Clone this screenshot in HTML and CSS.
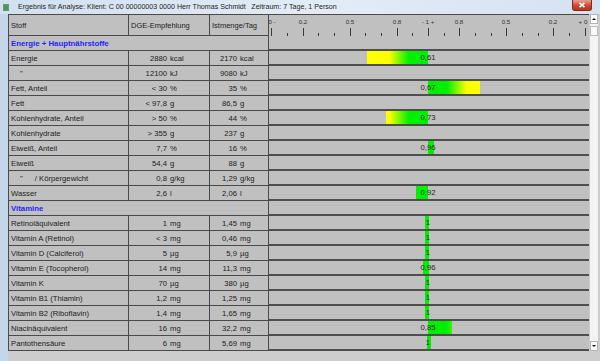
FILE: index.html
```html
<!DOCTYPE html>
<html lang="de">
<head>
    <meta charset="utf-8">
    <title>Ergebnis für Analyse</title>
    <link rel="stylesheet" href="styles.css">
</head>
<body>
<div class="window">
    <div class="titlebar">
        <svg class="app-icon" width="6" height="7" viewBox="0 0 6 7"><rect x="0" y="0" width="6" height="7" fill="#7d8b86"/><rect x="1" y="1" width="4" height="5" fill="#2fa84f"/></svg>
        <span class="title">Ergebnis für Analyse: Klient: C 00 00000003 0000 Herr Thomas Schmidt<span class="period">Zeitraum: 7 Tage, 1 Person</span></span>
        <span class="close"><svg width="8" height="6" viewBox="0 0 8 6"><path d="M1.5 0.8 L6.5 5.2 M6.5 0.8 L1.5 5.2" stroke="#fff" stroke-width="1.6"/></svg></span>
    </div>
    <div class="client">
        <div class="view">
            <div class="table">
                <div class="row head">
                    <div class="cell">Stoff</div>
                    <div class="cell">DGE-Empfehlung</div>
                    <div class="cell">Istmenge/Tag</div>
                    <div class="cell chart ruler">
                        <span class="mark" style="left:3px">0 -</span>
                        <span class="mark" style="left:34px">0.2</span>
                        <span class="mark" style="left:81px">0.5</span>
                        <span class="mark" style="left:128px">0.8</span>
                        <span class="mark" style="left:159px">- 1 +</span>
                        <span class="mark" style="left:190px">0.8</span>
                        <span class="mark" style="left:237px">0.5</span>
                        <span class="mark" style="left:284px">0.2</span>
                        <span class="mark" style="left:314px">+ 0</span>
                        <i class="tick major" style="left:2px"></i>
                        <i class="tick" style="left:18px"></i>
                        <i class="tick major" style="left:34px"></i>
                        <i class="tick" style="left:49px"></i>
                        <i class="tick" style="left:65px"></i>
                        <i class="tick major" style="left:81px"></i>
                        <i class="tick" style="left:96px"></i>
                        <i class="tick" style="left:112px"></i>
                        <i class="tick major" style="left:128px"></i>
                        <i class="tick" style="left:143px"></i>
                        <i class="tick major" style="left:159px"></i>
                        <i class="tick" style="left:175px"></i>
                        <i class="tick major" style="left:190px"></i>
                        <i class="tick" style="left:206px"></i>
                        <i class="tick" style="left:222px"></i>
                        <i class="tick major" style="left:237px"></i>
                        <i class="tick" style="left:253px"></i>
                        <i class="tick" style="left:269px"></i>
                        <i class="tick major" style="left:284px"></i>
                        <i class="tick" style="left:300px"></i>
                        <i class="tick major" style="left:316px"></i>
                    </div>
                </div>

                <div class="row section">
                    <div class="cell label">Energie + Hauptnährstoffe</div>
                    <div class="cell chart"></div>
                </div>
                <div class="row">
                    <div class="cell">Energie</div>
                    <div class="cell dge"><span class="num">2880</span><span class="unit">kcal</span></div>
                    <div class="cell ist"><span class="num">2170</span><span class="unit">kcal</span></div>
                    <div class="cell chart"><span class="bar" style="left:98px;width:61px;background-position:-98px 0"></span><span class="val">0,61</span></div>
                </div>
                <div class="row">
                    <div class="cell"><span class="ditto">"</span></div>
                    <div class="cell dge"><span class="num">12100</span><span class="unit">kJ</span></div>
                    <div class="cell ist"><span class="num">9080</span><span class="unit">kJ</span></div>
                    <div class="cell chart"></div>
                </div>
                <div class="row">
                    <div class="cell">Fett, Anteil</div>
                    <div class="cell dge"><span class="num">&lt; 30</span><span class="unit">%</span></div>
                    <div class="cell ist"><span class="num">35</span><span class="unit">%</span></div>
                    <div class="cell chart"><span class="bar" style="left:159px;width:52px;background-position:-159px 0"></span><span class="val">0,67</span></div>
                </div>
                <div class="row">
                    <div class="cell">Fett</div>
                    <div class="cell dge"><span class="num">&lt; 97,8</span><span class="unit">g</span></div>
                    <div class="cell ist"><span class="num">86,5</span><span class="unit">g</span></div>
                    <div class="cell chart"></div>
                </div>
                <div class="row">
                    <div class="cell">Kohlenhydrate, Anteil</div>
                    <div class="cell dge"><span class="num">&gt; 50</span><span class="unit">%</span></div>
                    <div class="cell ist"><span class="num">44</span><span class="unit">%</span></div>
                    <div class="cell chart"><span class="bar" style="left:117px;width:42px;background-position:-117px 0"></span><span class="val">0,73</span></div>
                </div>
                <div class="row">
                    <div class="cell">Kohlenhydrate</div>
                    <div class="cell dge"><span class="num">&gt; 355</span><span class="unit">g</span></div>
                    <div class="cell ist"><span class="num">237</span><span class="unit">g</span></div>
                    <div class="cell chart"></div>
                </div>
                <div class="row">
                    <div class="cell">Eiweiß, Anteil</div>
                    <div class="cell dge"><span class="num">7,7</span><span class="unit">%</span></div>
                    <div class="cell ist"><span class="num">16</span><span class="unit">%</span></div>
                    <div class="cell chart"><span class="bar" style="left:159px;width:6px;background-position:-159px 0"></span><span class="val">0,96</span></div>
                </div>
                <div class="row">
                    <div class="cell">Eiweiß</div>
                    <div class="cell dge"><span class="num">54,4</span><span class="unit">g</span></div>
                    <div class="cell ist"><span class="num">88</span><span class="unit">g</span></div>
                    <div class="cell chart"></div>
                </div>
                <div class="row">
                    <div class="cell"><span class="ditto">"</span><span class="sub">/ Körpergewicht</span></div>
                    <div class="cell dge"><span class="num">0,8</span><span class="unit">g/kg</span></div>
                    <div class="cell ist"><span class="num">1,29</span><span class="unit">g/kg</span></div>
                    <div class="cell chart"></div>
                </div>
                <div class="row">
                    <div class="cell">Wasser</div>
                    <div class="cell dge"><span class="num">2,6</span><span class="unit">l</span></div>
                    <div class="cell ist"><span class="num">2,06</span><span class="unit">l</span></div>
                    <div class="cell chart"><span class="bar" style="left:147px;width:12px;background-position:-147px 0"></span><span class="val">0,92</span></div>
                </div>

                <div class="row section">
                    <div class="cell label">Vitamine</div>
                    <div class="cell chart"></div>
                </div>
                <div class="row">
                    <div class="cell">Retinoläquivalent</div>
                    <div class="cell dge"><span class="num">1</span><span class="unit">mg</span></div>
                    <div class="cell ist"><span class="num">1,45</span><span class="unit">mg</span></div>
                    <div class="cell chart"><span class="bar" style="left:156px;width:4px;background-position:-156px 0"></span><span class="val">1</span></div>
                </div>
                <div class="row">
                    <div class="cell">Vitamin A (Retinol)</div>
                    <div class="cell dge"><span class="num">&lt; 3</span><span class="unit">mg</span></div>
                    <div class="cell ist"><span class="num">0,46</span><span class="unit">mg</span></div>
                    <div class="cell chart"><span class="bar" style="left:156px;width:4px;background-position:-156px 0"></span><span class="val">1</span></div>
                </div>
                <div class="row">
                    <div class="cell">Vitamin D (Calciferol)</div>
                    <div class="cell dge"><span class="num">5</span><span class="unit">µg</span></div>
                    <div class="cell ist"><span class="num">5,9</span><span class="unit">µg</span></div>
                    <div class="cell chart"><span class="bar" style="left:156px;width:4px;background-position:-156px 0"></span><span class="val">1</span></div>
                </div>
                <div class="row">
                    <div class="cell">Vitamin E (Tocopherol)</div>
                    <div class="cell dge"><span class="num">14</span><span class="unit">mg</span></div>
                    <div class="cell ist"><span class="num">11,3</span><span class="unit">mg</span></div>
                    <div class="cell chart"><span class="bar" style="left:154px;width:6px;background-position:-154px 0"></span><span class="val">0,96</span></div>
                </div>
                <div class="row">
                    <div class="cell">Vitamin K</div>
                    <div class="cell dge"><span class="num">70</span><span class="unit">µg</span></div>
                    <div class="cell ist"><span class="num">380</span><span class="unit">µg</span></div>
                    <div class="cell chart"><span class="bar" style="left:156px;width:4px;background-position:-156px 0"></span><span class="val">1</span></div>
                </div>
                <div class="row">
                    <div class="cell">Vitamin B1 (Thiamin)</div>
                    <div class="cell dge"><span class="num">1,2</span><span class="unit">mg</span></div>
                    <div class="cell ist"><span class="num">1,25</span><span class="unit">mg</span></div>
                    <div class="cell chart"><span class="bar" style="left:156px;width:4px;background-position:-156px 0"></span><span class="val">1</span></div>
                </div>
                <div class="row">
                    <div class="cell">Vitamin B2 (Riboflavin)</div>
                    <div class="cell dge"><span class="num">1,4</span><span class="unit">mg</span></div>
                    <div class="cell ist"><span class="num">1,65</span><span class="unit">mg</span></div>
                    <div class="cell chart"><span class="bar" style="left:156px;width:4px;background-position:-156px 0"></span><span class="val">1</span></div>
                </div>
                <div class="row">
                    <div class="cell">Niacinäquivalent</div>
                    <div class="cell dge"><span class="num">16</span><span class="unit">mg</span></div>
                    <div class="cell ist"><span class="num">32,2</span><span class="unit">mg</span></div>
                    <div class="cell chart"><span class="bar" style="left:159px;width:24px;background-position:-159px 0"></span><span class="val">0,85</span></div>
                </div>
                <div class="row">
                    <div class="cell">Pantothensäure</div>
                    <div class="cell dge"><span class="num">6</span><span class="unit">mg</span></div>
                    <div class="cell ist"><span class="num">5,69</span><span class="unit">mg</span></div>
                    <div class="cell chart"><span class="bar" style="left:158px;width:4px;background-position:-158px 0"></span><span class="val">1</span></div>
                </div>
            </div>
            <div class="scrollbar">
                <div class="sb-btn"><i class="arrow up"></i></div>
                <div class="sb-thumb"></div>
                <div class="sb-track"></div>
                <div class="sb-btn"><i class="arrow down"></i></div>
            </div>
        </div>
        <div class="status"></div>
    </div>
</div>
</body>
</html>
```

FILE: styles.css
```css
* {
    box-sizing: border-box;
}

body {
    margin: 0;
    background: #c4d6ea;
    font-family: "Liberation Sans", Arial, sans-serif;
}

.window {
    width: 600px;
    height: 361px;
    display: flex;
    flex-direction: column;
    overflow: hidden;
    background: #c4d6ea;
}

/* Fensterrahmen oben */
.titlebar {
    height: 14px;
    display: flex;
    align-items: center;
    padding-left: 3px;
    background: linear-gradient(to right, #d3e0ef, #e3ecf6 55%, #d5e2f0);
}

.app-icon {
    margin-right: 9px;
    flex: none;
}

.title {
    font-size: 7.1px;
    color: #1e1e1e;
    white-space: nowrap;
}

.title .period {
    margin-left: 5.5px;
}

.close {
    margin-left: auto;
    margin-right: 8px;
    align-self: flex-start;
    width: 20px;
    height: 11px;
    display: flex;
    align-items: center;
    justify-content: center;
    background: linear-gradient(#e8a092, #cc4a34 55%, #b9321f);
    border: 1px solid #7d2b20;
    border-top: 0;
    border-radius: 0 0 3px 3px;
}

.client {
    flex: 1;
    display: flex;
    flex-direction: column;
    margin-left: 8px;
    background: #cdcdcd;
}

.view {
    display: flex;
    gap: 1px;
}

.status {
    flex: 1;
}

/* Tabelle */
.table {
    width: 581px;
    border-left: 1px solid #4a4a4a;
    border-top: 1px solid #4a4a4a;
    background: #c0c0c0;
    font-size: 7.7px;
    color: #1c1c1c;
}

.row {
    display: grid;
    grid-template-columns: 120px 81px 59px 320px;
    height: 15px;
}

.row.head {
    height: 21px;
    font-size: 7.5px;
}

.cell {
    display: flex;
    align-items: center;
    padding-left: 2px;
    white-space: nowrap;
    border-right: 1px solid #4a4a4a;
    border-bottom: 1px solid #4a4a4a;
}

.section .label {
    grid-column: span 3;
    color: #2424ff;
    font-weight: bold;
    font-size: 7.8px;
}

.ditto {
    margin-left: 9px;
}

.sub {
    margin-left: 12px;
}

.dge,
.ist {
    padding-left: 0;
}

.dge .num {
    width: 38px;
    text-align: right;
}

.ist .num {
    width: 27px;
    text-align: right;
}

.unit {
    margin-left: 3px;
}

/* Balkendiagramm */
.chart {
    position: relative;
    border-right: 0;
    border-bottom: 2px solid #4e4e4e;
}

.bar {
    position: absolute;
    top: 0;
    bottom: 0;
    background-image: linear-gradient(to right, #ffff00 120px, #00f000 140px, #00f000 178px, #ffff00 198px);
    background-size: 318px 100%;
}

.val {
    position: absolute;
    top: 0;
    bottom: 0;
    left: 139px;
    width: 40px;
    display: flex;
    align-items: center;
    justify-content: center;
    color: #262626;
}

.ruler {
    border-bottom: 0;
}

.mark {
    position: absolute;
    top: 3px;
    font-size: 6.2px;
    color: #333;
    transform: translateX(-50%);
}

.tick {
    position: absolute;
    bottom: 0;
    width: 1px;
    height: 3px;
    background: #3a3a3a;
}

.tick.major {
    height: 8px;
}

/* Scrollbar */
.scrollbar {
    width: 8px;
    display: flex;
    flex-direction: column;
    background: #f3f3f3;
}

.sb-btn {
    height: 10px;
    display: flex;
    align-items: center;
    justify-content: center;
    background: #fdfdfd;
    border: 1px solid #b4b4b4;
}

.sb-thumb {
    height: 10px;
    margin-top: 2px;
    background: #f9f9f9;
    border: 1px solid #bcbcbc;
}

.sb-track {
    flex: 1;
}

.arrow {
    width: 0;
    height: 0;
    border: 2px solid transparent;
}

.arrow.up {
    border-bottom-color: #111;
    margin-top: -2px;
}

.arrow.down {
    border-top-color: #111;
    margin-bottom: -2px;
}
```
